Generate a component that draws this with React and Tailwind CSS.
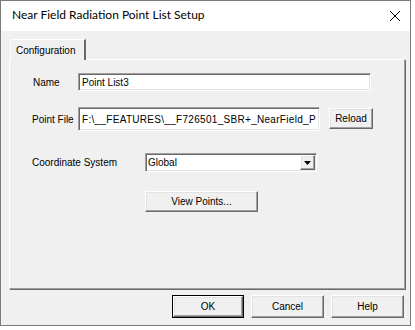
import React from "react";

const raised =
  "border border-t-white border-l-white border-r-[#696969] border-b-[#696969] shadow-[inset_-1px_-1px_0_#a0a0a0,inset_1px_1px_0_#e3e3e3] bg-[#f0f0f0]";
const sunken =
  "border border-t-[#a0a0a0] border-l-[#a0a0a0] border-r-white border-b-white shadow-[inset_1px_1px_0_#696969,inset_-1px_-1px_0_#e3e3e3] bg-white";

function Btn({ children, className = "" }) {
  return (
    <div className={`${raised} flex items-center justify-center text-[10px] text-black ${className}`}>
      {children}
    </div>
  );
}

export default function App() {
  return (
    <div className="w-[415px] h-[330px] bg-white">
      <div
        className="w-[411px] h-[326px] border border-[#7a7a7a] flex flex-col bg-[#f0f0f0]"
        style={{ fontFamily: '"Liberation Sans", Arial, sans-serif' }}
      >
        {/* Title bar */}
        <div className="h-[30px] bg-white flex items-center justify-between pl-[11px] pr-[9px]">
          <span
            className="text-[12px] text-black leading-none pb-[2px]"
            style={{ fontFamily: 'Lato, "Noto Sans", sans-serif' }}
          >
            Near Field Radiation Point List Setup
          </span>
          <svg width="12" height="12" viewBox="0 0 12 12" className="mb-[1px]">
            <path d="M1 1 L11 11 M11 1 L1 11" stroke="#000" strokeWidth="1" fill="none" />
          </svg>
        </div>

        {/* Body */}
        <div className="flex-1 flex flex-col pl-[8px] pt-[8px]">
          {/* Tab row */}
          <div className="h-[20px] flex">
            <div className="ml-[1px] w-[76px] h-[21px] border-t border-l border-white border-r-[2px] border-r-[#696969] bg-[#f0f0f0] relative z-10 flex items-center pl-[5px] text-[10px] text-black">
              Configuration
            </div>
          </div>
          {/* Panel */}
          <div className="w-[396px] h-[230px] border-t border-l border-white border-r border-b border-r-[#a0a0a0] border-b-[#a0a0a0] shadow-[1px_1px_0_#696969] flex flex-col pl-[22px] text-[10px] text-black">
            <div className="mt-[13px] flex items-center h-[18px]">
              <span className="w-[46px] pl-[1px]">Name</span>
              <div className={`${sunken} w-[293px] h-[18px] flex items-center pl-[3px]`}>Point List3</div>
            </div>
            <div className="mt-[16px] flex items-center h-[24px]">
              <span className="w-[46px]">Point File</span>
              <div className={`${sunken} w-[242px] h-[24px] flex items-center pl-[3px] overflow-hidden whitespace-nowrap tracking-[0.3px]`}>
                F:\__FEATURES\__F726501_SBR+_NearField_P
              </div>
              <Btn className="ml-[9px] w-[44px] h-[21px] mb-[1px]">Reload</Btn>
            </div>
            <div className="mt-[22px] flex items-center h-[19px]">
              <span className="w-[113px]">Coordinate System</span>
              <div className={`${sunken} w-[172px] h-[19px] flex items-center justify-between pl-[2px] pr-[1px]`}>
                <span>Global</span>
                <div className={`${raised} w-[15px] h-[15px] flex items-center justify-center`}>
                  <svg width="7" height="4" viewBox="0 0 7 4">
                    <path d="M0 0 L7 0 L3.5 4 Z" fill="#000" />
                  </svg>
                </div>
              </div>
            </div>
            <div className="mt-[19px] flex">
              <Btn className="ml-[113px] w-[113px] h-[21px]">View Points...</Btn>
            </div>
          </div>
          {/* Bottom buttons */}
          <div className="mt-[6px] flex justify-end gap-[7px] pr-[6px]">
            <div className="w-[72px] h-[23px] border border-black flex">
              <Btn className="flex-1">OK</Btn>
            </div>
            <Btn className="w-[73px] h-[23px]">Cancel</Btn>
            <Btn className="w-[73px] h-[23px]">Help</Btn>
          </div>
        </div>
      </div>
    </div>
  );
}
